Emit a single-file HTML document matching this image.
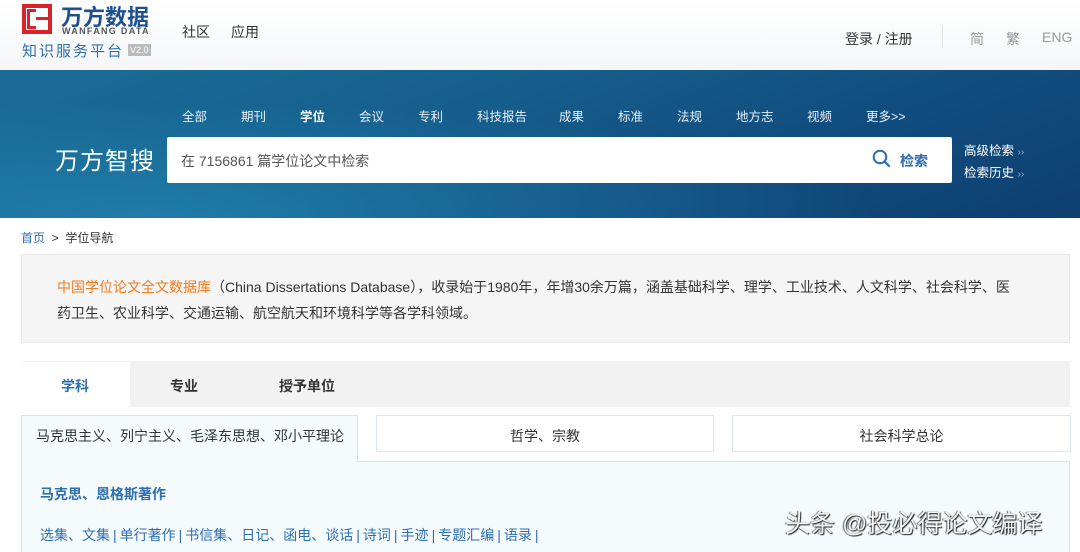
<!DOCTYPE html>
<html><head><meta charset="utf-8"><style>
*{margin:0;padding:0;box-sizing:border-box}
body{width:1080px;height:552px;overflow:hidden;background:#fff;font-family:"Liberation Sans","Noto Sans CJK SC",sans-serif;position:relative;color:#333}
.a{position:absolute;white-space:nowrap}
.n{position:absolute;top:106px;font-size:12.5px;color:#e6eef5}
.s{margin:0 3px;color:#2e6fb0}
</style></head><body>
<div class="a" style="left:0;top:0;width:1080px;height:70px;background:linear-gradient(#fff,#f4f6f8)"></div>
<div class="a" style="left:22px;top:4px;width:30px;height:30px;border:4px solid #d9232a"></div>
<div class="a" style="left:27px;top:9px;width:9px;height:20px;border:3px solid #d9232a;border-right:none"></div>
<div class="a" style="left:36px;top:17px;width:12px;height:3px;background:#d9232a"></div>
<div class="a" style="left:61px;top:0px;font-size:22px;font-weight:bold;color:#1d4f91">万方数据</div>
<div class="a" style="left:62px;top:26px;font-size:9px;font-weight:bold;color:#555;letter-spacing:1.3px">WANFANG DATA</div>
<div class="a" style="left:22px;top:40px;font-size:15px;color:#2e6fb0;letter-spacing:2px">知识服务平台</div>
<div class="a" style="left:128px;top:44px;font-size:9px;color:#fff;background:#bbb;padding:0 2px;line-height:12px">V2.0</div>
<div class="a" style="left:182px;top:22px;font-size:14px;color:#333">社区</div>
<div class="a" style="left:231px;top:22px;font-size:14px;color:#333">应用</div>
<div class="a" style="left:845px;top:29px;font-size:14px;color:#333">登录 / 注册</div>
<div class="a" style="left:942px;top:26px;width:1px;height:22px;background:#e3e3e3"></div>
<div class="a" style="left:970px;top:29px;font-size:14px;color:#999">简</div>
<div class="a" style="left:1006px;top:29px;font-size:14px;color:#999">繁</div>
<div class="a" style="left:1042px;top:29px;font-size:14px;color:#999">ENG</div>
<div class="a" style="left:0;top:70px;width:1080px;height:148px;background:linear-gradient(160deg,#1a6d98 0%,#16608e 35%,#114e80 65%,#0e3f70 100%)"></div>
<div class="a" style="left:0;top:70px;width:1080px;height:148px;background:radial-gradient(ellipse at 15% 100%,rgba(40,150,190,.55),transparent 55%)"></div>
<span class="n" style="left:182px">全部</span><span class="n" style="left:241px">期刊</span><b class="n" style="left:300px;color:#fff">学位</b><span class="n" style="left:359px">会议</span><span class="n" style="left:418px">专利</span><span class="n" style="left:477px">科技报告</span><span class="n" style="left:559px">成果</span><span class="n" style="left:618px">标准</span><span class="n" style="left:677px">法规</span><span class="n" style="left:736px">地方志</span><span class="n" style="left:807px">视频</span><span class="n" style="left:866px">更多&gt;&gt;</span>
<div class="a" style="left:55px;top:141px;font-size:24px;color:#fff;letter-spacing:1px">万方智搜</div>
<div class="a" style="left:167px;top:137px;width:785px;height:46px;background:#fff;border-radius:2px"></div>
<div class="a" style="left:181px;top:151px;font-size:14px;color:#555">在 7156861 篇学位论文中检索</div>
<svg class="a" style="left:872px;top:149px" width="20" height="20" viewBox="0 0 20 20"><circle cx="8" cy="8" r="6.3" fill="none" stroke="#2d6bb0" stroke-width="2"/><path d="M12.5 12.5L17 17" stroke="#2d6bb0" stroke-width="2.2" stroke-linecap="round"/></svg>
<div class="a" style="left:900px;top:151px;font-size:14px;font-weight:bold;color:#2d6bb0">检索</div>
<div class="a" style="left:964px;top:140px;font-size:12.5px;color:#fff">高级检索 <span style="color:#8fb3d0;font-size:10px">››</span></div>
<div class="a" style="left:964px;top:162px;font-size:12.5px;color:#fff">检索历史 <span style="color:#8fb3d0;font-size:10px">››</span></div>
<div class="a" style="left:21px;top:229px;font-size:12px;color:#2e6fb0">首页 <span style="color:#333">&nbsp;&gt;&nbsp; 学位导航</span></div>
<div class="a" style="left:21px;top:254px;width:1049px;height:89px;background:#f5f5f5;border:1px solid #e8e8e8"></div>
<div class="a" style="left:57px;top:274px;font-size:14px;color:#333;line-height:26px"><span style="color:#f07a1c">中国学位论文全文数据库</span>（China Dissertations Database），收录始于1980年，年增30余万篇，涵盖基础科学、理学、工业技术、人文科学、社会科学、医<br>药卫生、农业科学、交通运输、航空航天和环境科学等各学科领域。</div>
<div class="a" style="left:21px;top:361px;width:1049px;height:46px;background:#f2f2f2"></div>
<div class="a" style="left:21px;top:361px;width:109px;height:46px;background:#fff;border-top:1px solid #f2f2f2"></div>
<div class="a" style="left:61px;top:376px;font-size:14px;font-weight:bold;color:#2e6fb0">学科</div>
<div class="a" style="left:170px;top:376px;font-size:14px;font-weight:bold;color:#333">专业</div>
<div class="a" style="left:279px;top:376px;font-size:14px;font-weight:bold;color:#333">授予单位</div>
<div class="a" style="left:21px;top:461px;width:1049px;height:91px;background:#f5fafd;border:1px solid #d6e3ee;border-bottom:none"></div>
<div class="a" style="left:21px;top:415px;width:337px;height:47px;background:#f5fafd;border:1px solid #d6e3ee;border-bottom:none"></div>
<div class="a" style="left:376px;top:415px;width:338px;height:37px;background:#fff;border:1px solid #dde6ee"></div>
<div class="a" style="left:732px;top:415px;width:339px;height:37px;background:#fff;border:1px solid #dde6ee"></div>
<div class="a" style="left:36px;top:426px;font-size:14px;color:#333">马克思主义、列宁主义、毛泽东思想、邓小平理论</div>
<div class="a" style="left:376px;top:426px;width:338px;text-align:center;font-size:14px;color:#333">哲学、宗教</div>
<div class="a" style="left:732px;top:426px;width:339px;text-align:center;font-size:14px;color:#333">社会科学总论</div>
<div class="a" style="left:40px;top:484px;font-size:14px;font-weight:bold;color:#2e6fb0">马克思、恩格斯著作</div>
<div class="a" style="left:40px;top:525px;font-size:14px;color:#2e6fb0">选集、文集<span class="s">|</span>单行著作<span class="s">|</span>书信集、日记、函电、谈话<span class="s">|</span>诗词<span class="s">|</span>手迹<span class="s">|</span>专题汇编<span class="s">|</span>语录<span class="s">|</span></div>
<div class="a" style="left:785px;top:504px;font-size:25px;color:#f4f4f4;text-shadow:1px 1px 1px #222,-1px 0 1px #555">头条 @投必得论文编译</div>
</body></html>
